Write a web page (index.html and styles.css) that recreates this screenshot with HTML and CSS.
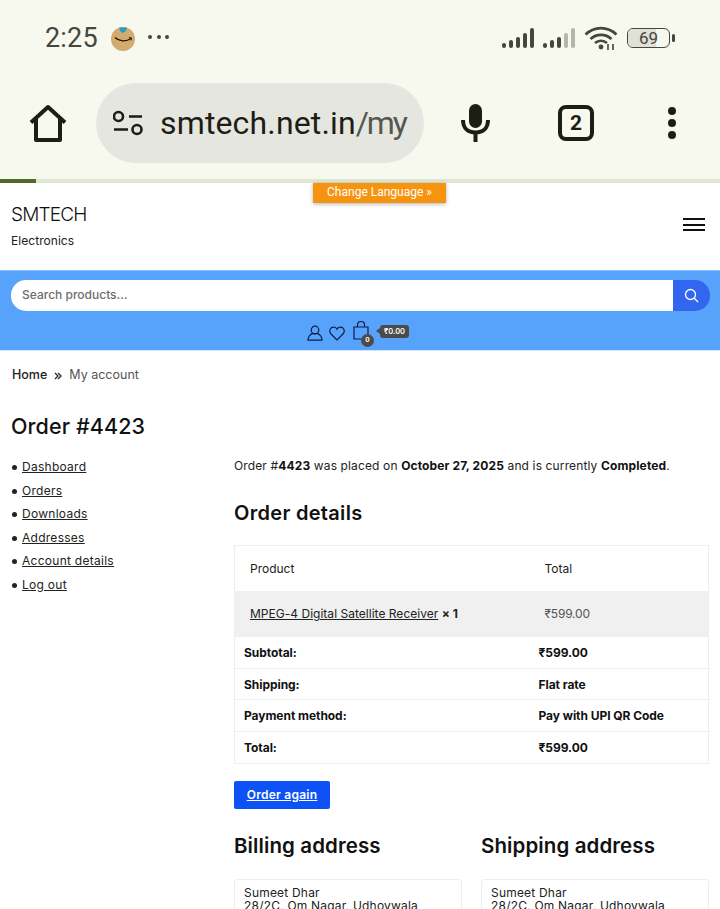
FILE: index.html
```html
<!DOCTYPE html>
<html lang="en">
<head>
<meta charset="utf-8">
<title>Order #4423 - SMTECH</title>
<link rel="stylesheet" href="styles.css">
</head>
<body>
<div class="status">
  <span class="time">2:25</span>
  <svg class="amazon" width="26" height="26" viewBox="0 0 26 26"><circle cx="13" cy="14" r="12" fill="#d3ab6f"/><path d="M9 2.500h8l-1.500 4-3 1.500-2-1.500z" fill="#1f9fd0"/><path d="M5 12.500c4 4 11 4.500 16 1" fill="none" stroke="#1a1408" stroke-width="1.300"/><path d="M19 12.500l2.600.6-.8 2.300" fill="none" stroke="#1a1408" stroke-width="1"/></svg>
  <span class="dots3"><i></i><i></i><i></i></span>
  <span class="status-right">
    <svg width="33" height="22" viewBox="0 0 33 22" fill="#44463f"><rect x="0" y="16" width="4" height="5" rx="2"/><rect x="7" y="13" width="4" height="8" rx="2"/><rect x="14" y="10" width="4" height="11" rx="2"/><rect x="21" y="6" width="4" height="15" rx="2"/><rect x="28" y="1" width="4" height="20" rx="2"/></svg>
    <svg width="33" height="22" viewBox="0 0 33 22" fill="#44463f"><rect x="0" y="16" width="4" height="5" rx="2"/><rect x="7" y="13" width="4" height="8" rx="2"/><rect x="14" y="10" width="4" height="11" rx="2"/><rect x="21" y="6" width="4" height="15" rx="2" fill="#b4b6ad"/><rect x="28" y="1" width="4" height="20" rx="2" fill="#b4b6ad"/></svg>
    <svg width="34" height="26" viewBox="0 0 34 26" fill="none" stroke="#44463f" stroke-width="2.600"><path d="M1.500 9.500c9-8.500 22-8.500 31 0"/><path d="M6.500 14c6-5.500 15-5.500 21 0"/><path d="M11 18c3.500-3 8.500-3 12 0"/><circle cx="17" cy="22" r="2.400" fill="#44463f" stroke="none"/><path d="M24 19v6M29 19v6" stroke-width="1.600"/></svg>
    <span class="battery"><span class="battery-fill"></span><span class="battery-num">69</span></span><span class="battery-tip"></span>
  </span>
</div>
<div class="toolbar">
  <svg class="home" width="38" height="38" viewBox="0 0 38 38" fill="none" stroke="#1d1d15" stroke-width="4" stroke-linejoin="round"><path d="M2 18.500 19 3l17 15.500M7 15v21h24V15"/></svg>
  <div class="pill">
    <svg width="30" height="28" viewBox="0 0 30 28" fill="none" stroke="#1d1d15" stroke-width="2.600"><circle cx="5.500" cy="7.500" r="4.500"/><path d="M16 7.500h13M1 20.500h14"/><circle cx="24" cy="20.500" r="4.500"/></svg>
    <span class="url">smtech.net.in<span class="url-path">/my</span></span>
  </div>
  <svg class="mic" width="30" height="40" viewBox="0 0 30 40"><rect x="8" y="1" width="13" height="24" rx="6.500" fill="#1d1d15"/><path d="M2 17c0 8 5 12.500 12.500 12.500S27 25 27 17M14.500 29v10" fill="none" stroke="#1d1d15" stroke-width="4"/></svg>
  <span class="tabs">2</span>
  <span class="kebab"><i></i><i></i><i></i></span>
</div>
<div class="progress"><div class="progress-fill"></div></div>

<a class="lang">Change Language »</a>

<header class="site-head">
  <div>
    <div class="brand">SMTECH</div>
    <div class="tagline">Electronics</div>
  </div>
  <span class="burger"><i></i><i></i><i></i></span>
</header>

<section class="blue">
  <div class="search">
    <div class="search-input">Search products...</div>
    <div class="search-btn"><svg width="15" height="15" viewBox="0 0 15 15" fill="none" stroke="#fff" stroke-width="1.300"><circle cx="6.500" cy="6.500" r="5"/><path d="M10.300 10.300 14 14"/></svg></div>
  </div>
  <div class="shop-icons">
    <svg width="16" height="16" viewBox="0 0 16 16" fill="none" stroke="#0b1c4a" stroke-width="1.200"><circle cx="8" cy="5" r="3.800"/><path d="M1 15.200c0-3 2-6 4.500-6.500h5c2.500.5 4.500 3.500 4.500 6.500z"/></svg>
    <svg width="16" height="15" viewBox="0 0 16 15" fill="none" stroke="#0b1c4a" stroke-width="1.200"><path d="M8 14 2 8C0 6 .6 2.800 2.600 1.600 4.600.5 7 1.200 8 3.200c1-2 3.400-2.700 5.400-1.600C15.400 2.800 16 6 14 8z"/></svg>
    <span class="bag">
      <svg width="16" height="19" viewBox="0 0 16 19" fill="none" stroke="#0b1c4a" stroke-width="1.200"><path d="M1 6h14v12H1zM4.500 6V4a3.500 3.500 0 0 1 7 0v2"/></svg>
      <span class="bag-count">0</span>
    </span>
    <span class="amount">₹0.00</span>
  </div>
</section>

<nav class="crumbs"><a>Home</a><svg width="8" height="8" viewBox="0 0 8 8" fill="none" stroke="#222" stroke-width="1.200"><path d="M1 1l3 3-3 3M4 1l3 3-3 3"/></svg><span>My account</span></nav>

<h1 class="page-title">Order #4423</h1>

<div class="columns">
  <ul class="side">
    <li><a>Dashboard</a></li>
    <li><a>Orders</a></li>
    <li><a>Downloads</a></li>
    <li><a>Addresses</a></li>
    <li><a>Account details</a></li>
    <li><a>Log out</a></li>
  </ul>
  <main class="content">
    <p class="intro">Order #<b>4423</b> was placed on <b>October 27, 2025</b> and is currently <b>Completed</b>.</p>
    <h2 class="order-h">Order details</h2>
    <table class="order">
      <tr class="r-head"><td>Product</td><td>Total</td></tr>
      <tr class="r-item"><td><a>MPEG-4 Digital Satellite Receiver</a> <b>× 1</b></td><td>₹599.00</td></tr>
      <tr class="r-foot"><th>Subtotal:</th><th>₹599.00</th></tr>
      <tr class="r-foot"><th>Shipping:</th><th>Flat rate</th></tr>
      <tr class="r-foot"><th>Payment method:</th><th>Pay with UPI QR Code</th></tr>
      <tr class="r-foot"><th>Total:</th><th>₹599.00</th></tr>
    </table>
    <a class="again">Order again</a>
    <div class="addresses">
      <div class="addr">
        <h2>Billing address</h2>
        <div class="addr-box">Sumeet Dhar<br>28/2C, Om Nagar, Udhoywala</div>
      </div>
      <div class="addr">
        <h2>Shipping address</h2>
        <div class="addr-box">Sumeet Dhar<br>28/2C, Om Nagar, Udhoywala</div>
      </div>
    </div>
  </main>
</div>
</body>
</html>
```

FILE: styles.css
```css
* { box-sizing: border-box; }
html, body { margin: 0; height: 909px; overflow: hidden; background: #fff; }
body { font-family: Inter, "Liberation Sans", sans-serif; font-size: 12px; color: #1a1a1a; position: relative; }
a { color: inherit; }

.status { height: 76px; background: #f7f8ee; display: flex; align-items: center; padding: 0 45px; font-family: Roboto, sans-serif; color: #44463f; }
.time { font-size: 27px; line-height: 1; width: 52px; letter-spacing: .2px; white-space: nowrap; }
.amazon { margin-left: 13px; }
.dots3 { display: flex; gap: 4.500px; margin-left: 12px; margin-top: -2px; }
.dots3 i { width: 4px; height: 4px; border-radius: 50%; background: #44463f; }
.status-right { margin-left: auto; display: flex; align-items: center; gap: 8px; }
.battery { width: 43px; height: 20px; border: 1.500px solid #44463f; border-radius: 6px; position: relative; display: block; margin-left: 1px; overflow: hidden; }
.battery-fill { position: absolute; left: 0; top: 0; bottom: 0; width: 69%; background: #dfe0d8; }
.battery-num { position: absolute; inset: 0; text-align: center; font-size: 17px; line-height: 18px; }
.battery-tip { width: 3px; height: 8px; background: #44463f; border-radius: 2px; margin-left: -6px; }

.toolbar { height: 103px; background: #f7f8ee; display: flex; align-items: flex-start; padding-top: 7px; position: relative; }
.home { margin: 21px 0 0 29px; }
.pill { width: 328px; height: 80px; margin-left: 29px; background: #e5e6df; border-radius: 40px; display: flex; align-items: center; padding-left: 17px; gap: 17px; color: #1d1d15; overflow: hidden; }
.url { font-family: Roboto, sans-serif; font-size: 32px; letter-spacing: .15px; white-space: nowrap; }
.url-path { color: #55574f; letter-spacing: -2.200px; }
.mic { margin: 20px 0 0 37px; }
.tabs { width: 36px; height: 36px; margin: 22px 0 0 67px; border: 4px solid #1d1d15; border-radius: 8px; font: 700 21px/28px Roboto, sans-serif; color: #1d1d15; text-align: center; }
.kebab { margin: 24px 0 0 74px; display: flex; flex-direction: column; gap: 4px; }
.kebab i { width: 8px; height: 8px; border-radius: 50%; background: #1d1d15; }

.progress { height: 4px; background: #dfe8d2; }
.progress-fill { width: 36px; height: 4px; background: #55692f; }

.lang { position: absolute; left: 313px; top: 183px; width: 133px; height: 20px; background: #f7940f; color: #fff; font: 12px/18px Roboto, sans-serif; text-align: center; box-shadow: 0 1px 4px rgba(0,0,0,.3); }

.site-head { height: 87px; padding: 19px 15px 0 11px; display: flex; justify-content: space-between; }
.brand { font-size: 19px; line-height: 25px; font-weight: 300; color: #111; letter-spacing: -.8px; }
.tagline { font-size: 12px; line-height: 16px; margin-top: 6px; color: #222; letter-spacing: .05px; }
.burger { display: flex; flex-direction: column; gap: 3.500px; margin-top: 16px; }
.burger i { width: 22px; height: 2px; background: #111; }

.blue { height: 81px; background: #57a3fb; padding: 9px 10px 0 11px; border-top: 1px solid #8fc0fa; border-bottom: 1px solid #cfe3fa; }
.search { display: flex; height: 31px; }
.search-input { flex: 1; background: #fff; border-radius: 15px 0 0 15px; padding-left: 11px; line-height: 29px; font-size: 12px; color: #6d6d6d; font-weight: 500; }
.search-btn { width: 37px; background: #3366f0; border-radius: 0 15px 15px 0; display: flex; align-items: center; justify-content: center; }
.shop-icons { display: flex; align-items: center; height: 30px; margin-top: 7px; padding-left: 296px; position: relative; }
.shop-icons svg { display: block; }
.shop-icons > svg:nth-child(2) { margin-left: 6px; }
.bag { position: relative; margin-left: 8px; margin-top: -6px; display: block; }
.bag-count { position: absolute; left: 8px; top: 13px; width: 13px; height: 13px; border-radius: 50%; background: #4b4b4b; color: #fff; font-size: 6.500px; font-weight: 700; line-height: 13px; text-align: center; }
.amount { position: absolute; left: 369px; top: 7px; height: 13px; padding: 0 4px; background: #4b4b4b; color: #fff; font-size: 7.500px; font-weight: 600; line-height: 13px; border-radius: 3px; }
.amount::before { content: ""; position: absolute; left: -4px; top: 3px; border: 3.500px solid transparent; border-left-width: 0; border-right: 4px solid #4b4b4b; }

.crumbs { display: flex; align-items: center; padding: 7px 0 0 12px; height: 41px; font-size: 12.500px; color: #555; line-height: 18px; }
.crumbs a { color: #222; font-weight: 500; }
.crumbs svg { margin: 2px 7px 0 7px; }

.page-title { margin: 17px 0 0 11px; font-size: 21.500px; line-height: 34px; font-weight: 500; color: #111; letter-spacing: .1px; }

.columns { display: flex; padding: 13px 11px 0; }
.side { width: 223px; margin: 2px 0 0; padding: 0; list-style: none; }
.side li { height: 23.600px; line-height: 18px; padding-left: 11px; position: relative; letter-spacing: .27px; color: #222; }
.side li::before { content: ""; position: absolute; left: 1px; top: 7px; width: 5px; height: 5px; border-radius: 50%; background: #222; }
.side a { text-decoration: underline; }

.content { width: 475px; }
.intro { margin: 1px 0 0; line-height: 18px; font-size: 12px; color: #222; letter-spacing: .13px; }
.intro b { font-weight: 700; color: #111; }
.order-h { margin: 24px 0 0; font-size: 20px; line-height: 28px; font-weight: 600; color: #111; letter-spacing: .3px; }

.order { width: 475px; margin-top: 18px; border-collapse: collapse; table-layout: fixed; border: 1px solid #eee; }
.order td:first-child, .order th:first-child { width: 295px; }
.r-head td { height: 45px; padding: 0 15px; font-size: 12px; color: #222; }
.r-item td { height: 46px; padding: 0 15px; background: #f0f0f0; color: #222; letter-spacing: .02px; }
.r-item td:last-child { color: #555; letter-spacing: -.2px; }
.r-item a { text-decoration: underline; }
.r-foot th { height: 31.700px; padding: 0 9px; text-align: left; font-weight: 700; color: #111; border-top: 1px solid #eee; letter-spacing: -.05px; }

.again { display: block; width: 96px; height: 28px; margin-top: 17px; background: #0d52f5; color: #fff; border-radius: 2px; font-weight: 600; line-height: 27px; text-align: center; text-decoration: underline; letter-spacing: .25px; }

.addresses { display: flex; gap: 19px; margin-top: 23px; }
.addr { width: 228px; }
.addr h2 { margin: 0; font-size: 20.500px; line-height: 28px; font-weight: 600; color: #111; letter-spacing: .1px; white-space: nowrap; }
.addr-box { margin-top: 19px; padding: 6px 9px; border: 1px solid #eee; border-radius: 3px; line-height: 13px; color: #222; height: 60px; letter-spacing: .2px; }
```
